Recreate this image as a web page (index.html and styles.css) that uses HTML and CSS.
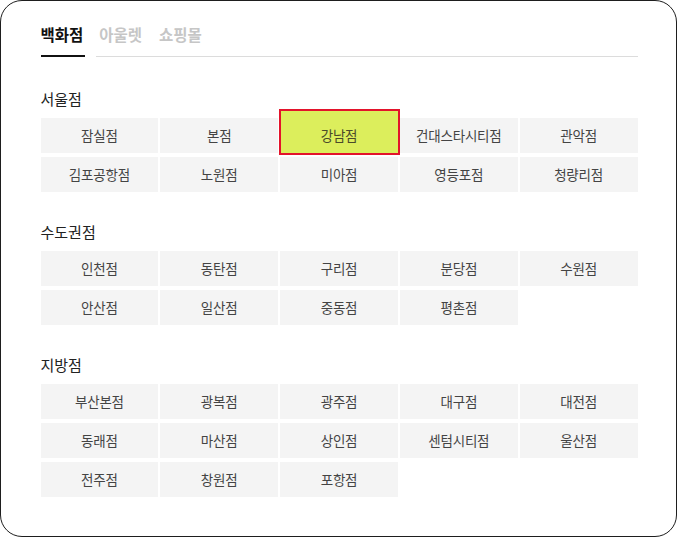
FILE: index.html
```html
<!DOCTYPE html>
<html lang="ko">
<head>
<meta charset="utf-8">
<link rel="stylesheet" href="styles.css">
</head>
<body>
<div class="frame">
  <div class="tabs">
    <div class="tab active">백화점</div>
    <div class="rest">
      <div class="tab">아울렛</div>
      <div class="tab">쇼핑몰</div>
    </div>
  </div>

  <div class="section first">
    <h3 class="title">서울점</h3>
    <div class="grid">
      <div class="cell">잠실점</div>
      <div class="cell">본점</div>
      <div class="cell sel"><span>강남점</span></div>
      <div class="cell">건대스타시티점</div>
      <div class="cell">관악점</div>
      <div class="cell">김포공항점</div>
      <div class="cell">노원점</div>
      <div class="cell">미아점</div>
      <div class="cell">영등포점</div>
      <div class="cell">청량리점</div>
    </div>
  </div>

  <div class="section">
    <h3 class="title">수도권점</h3>
    <div class="grid">
      <div class="cell">인천점</div>
      <div class="cell">동탄점</div>
      <div class="cell">구리점</div>
      <div class="cell">분당점</div>
      <div class="cell">수원점</div>
      <div class="cell">안산점</div>
      <div class="cell">일산점</div>
      <div class="cell">중동점</div>
      <div class="cell">평촌점</div>
    </div>
  </div>

  <div class="section">
    <h3 class="title">지방점</h3>
    <div class="grid">
      <div class="cell">부산본점</div>
      <div class="cell">광복점</div>
      <div class="cell">광주점</div>
      <div class="cell">대구점</div>
      <div class="cell">대전점</div>
      <div class="cell">동래점</div>
      <div class="cell">마산점</div>
      <div class="cell">상인점</div>
      <div class="cell">센텀시티점</div>
      <div class="cell">울산점</div>
      <div class="cell">전주점</div>
      <div class="cell">창원점</div>
      <div class="cell">포항점</div>
    </div>
  </div>
</div>
</body>
</html>
```
FILE: styles.css
```css
* { box-sizing: border-box; }
html, body { margin: 0; padding: 0; background: #fff; }
body {
  font-family: "Noto Sans CJK KR", "Noto Sans", sans-serif;
  color: #333;
}
.frame {
  width: 677px;
  height: 537px;
  border: 1.5px solid #1e1e1e;
  border-radius: 22px;
  padding: 22.5px 38.5px 0 39.5px;
  background: #fff;
}
.tabs {
  display: flex;
  align-items: stretch;
}
.tab {
  font-size: 15.5px;
  line-height: 20px;
  color: #c6c6c6;
  font-weight: 700;
  padding-bottom: 11px;
}
.tab.active {
  color: #111;
  border-bottom: 2px solid #111;
  margin-right: 11px;
  padding-right: 2px;
}
.rest {
  flex: 1;
  display: flex;
  gap: 17px;
  padding-left: 3px;
  border-bottom: 1px solid #dcdcdc;
}
.rest .tab { padding-bottom: 0; }
.section { margin-top: 30px; }
.section.first { margin-top: 32px; }
.title {
  margin: 0 0 9px;
  font-size: 15px;
  line-height: 20px;
  font-weight: 400;
  color: #222;
}
.grid {
  display: grid;
  grid-template-columns: repeat(5, 1fr);
  column-gap: 2px;
  row-gap: 4px;
}
.cell {
  height: 35px;
  background: #f4f4f4;
  display: flex;
  align-items: center;
  justify-content: center;
  font-size: 13.5px;
  color: #444;
  letter-spacing: -0.2px;
}
.cell.sel { position: relative; }
.cell.sel::before {
  content: "";
  position: absolute;
  top: -9px;
  bottom: -2px;
  left: -1px;
  right: -2px;
  background: #dcee5c;
  border: 2px solid #e3132b;
}
.cell.sel span {
  position: relative;
  color: #4a4a2a;
}
```
